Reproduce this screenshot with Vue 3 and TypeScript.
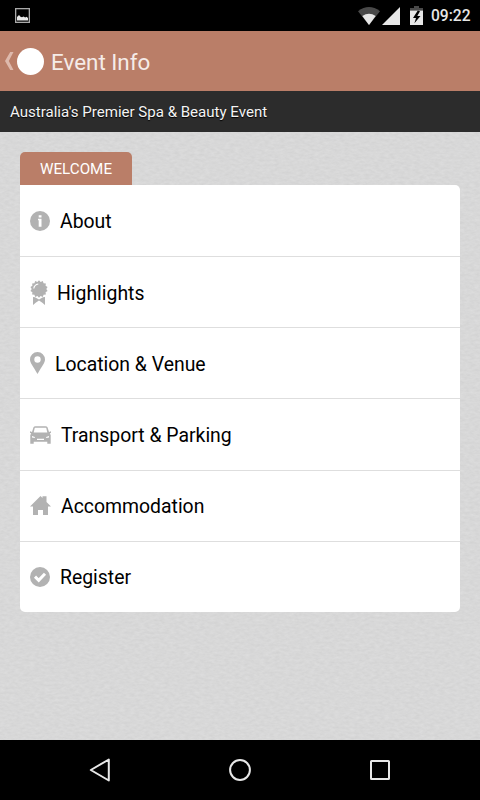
<script setup lang="ts">
interface MenuItem {
  id: string
  label: string
  width: number
  gap: number
}

const items: MenuItem[] = [
  { id: 'about', label: 'About', width: 20, gap: 10 },
  { id: 'highlights', label: 'Highlights', width: 18, gap: 9 },
  { id: 'location', label: 'Location & Venue', width: 15, gap: 10 },
  { id: 'transport', label: 'Transport & Parking', width: 21, gap: 10 },
  { id: 'accommodation', label: 'Accommodation', width: 21, gap: 10 },
  { id: 'register', label: 'Register', width: 20, gap: 10 },
]

// Outline of the fourteen-toothed rosette
const rosette: string = Array.from({ length: 28 }, (_, i) => {
  const angle = (i * Math.PI) / 14
  const r = i % 2 ? 7.3 : 8.8
  return `${(9 + r * Math.sin(angle)).toFixed(2)},${(9 - r * Math.cos(angle)).toFixed(2)}`
}).join(' ')
</script>

<template>
  <div class="screen">
    <div class="status-bar">
      <svg class="picture" width="15" height="15" viewBox="0 0 15 15">
        <rect x=".65" y=".65" width="13.7" height="13.7" fill="none" stroke="#aaa" stroke-width="1.3" />
        <path d="M2 12.500V9L4 7l1.500 1.700L7 9.300 8.500 8.500l1.700 1L11.500 8.700l1.500 1.300v2.500z" fill="#e8e8e8" />
      </svg>
      <div class="status-right">
        <svg class="wifi" width="22" height="18" viewBox="0 0 22 18">
          <path d="M0 4.200Q11-4 22 4.200L11 18z" fill="#494949" />
          <path d="M4.300 9Q11 4.500 17.700 9L11 18z" fill="#e7e7e7" />
        </svg>
        <svg class="signal" width="18" height="18" viewBox="0 0 18 18"><path d="M18 0v18H0z" fill="#e7e7e7" /></svg>
        <svg class="battery" width="13" height="19" viewBox="0 0 13 19">
          <path d="M0 4.500V2h4V0h5v2h4v2.500z" fill="#494949" />
          <path d="M0 4.500h13V19H0z" fill="#e7e7e7" />
          <path d="M7.800 4.500L3 12h3l-1.600 5.200L10.500 10H7.300L10 5.200z" fill="#000" />
        </svg>
        <span class="clock">09:22</span>
      </div>
    </div>

    <header class="action-bar">
      <svg class="chevron" width="9" height="18" viewBox="0 0 9 18">
        <path d="M5.200 0H8.500L3.800 9l4.700 9H5.200L0 9z" fill="#deb9ac" />
      </svg>
      <span class="logo"></span>
      <h1>Event Info</h1>
    </header>
    <div class="subtitle">Australia's Premier Spa &amp; Beauty Event</div>

    <main>
      <svg class="paper" width="480" height="608" aria-hidden="true">
        <filter id="grain" x="0" y="0" width="100%" height="100%" color-interpolation-filters="sRGB">
          <feTurbulence type="fractalNoise" baseFrequency=".2 .4" numOctaves="3" seed="7" />
          <feColorMatrix values=".055 0 0 0 .818  .055 0 0 0 .818  .055 0 0 0 .819  0 0 0 0 1" />
        </filter>
        <rect width="480" height="608" filter="url(#grain)" />
      </svg>
      <div class="tab">WELCOME</div>
      <ul class="menu">
        <li v-for="item in items" :key="item.id" :style="{ gap: item.gap + 'px' }">
          <svg v-if="item.id === 'about'" class="icon" :width="item.width" height="20" viewBox="0 0 20 20">
            <circle cx="10" cy="10" r="10" fill="#b2b2b2" />
            <path d="M8.700 4.200h2.800v2.300H8.700zM8 7.800h3.500V15.700H8.700V9.300H8z" fill="#fff" />
          </svg>
          <svg v-else-if="item.id === 'highlights'" class="icon award" :width="item.width" height="25" viewBox="0 0 18 25">
            <polygon :points="rosette" fill="#b2b2b2" />
            <path d="M3.800 8.500Q4.300 4.700 8.300 4" fill="none" stroke="#fff" stroke-width="1.200" />
            <path d="M3 17l2 .2 4 2.300 4-2.300 2-.2v8l-3-2.600-3-1.800-3 1.800L3 25z" fill="#b2b2b2" />
          </svg>
          <svg v-else-if="item.id === 'location'" class="icon" :width="item.width" height="22" viewBox="0 0 15 22">
            <path fill-rule="evenodd" d="M7.500 0A7.500 7.500 0 0 0 0 7.500C0 11 3 14 7.500 22 12 14 15 11 15 7.500A7.500 7.500 0 0 0 7.500 0m0 4.300a3.200 3.200 0 1 1 0 6.400 3.200 3.200 0 0 1 0-6.400" fill="#b2b2b2" />
          </svg>
          <svg v-else-if="item.id === 'transport'" class="icon" :width="item.width" height="18" viewBox="0 0 21 18">
            <path fill-rule="evenodd" d="M3.500 1.200Q4 .3 5.500.3h10q1.500 0 2 .9L19 6l2-.7v1.500l-1.200.8.900 1.400v8.700h-3.400V15.800H3.700v1.900H.3V9l.9-1.400L0 6.800V5.300L2 6zM4.800 1.800L3.700 6.500h13.600L16.200 1.800zM2 9.900v1.500l2.800.5v-1zM19 9.900l-2.800 1v1l2.800-.5zM7 12.800v1.200h7v-1.200z" fill="#b2b2b2" />
          </svg>
          <svg v-else-if="item.id === 'accommodation'" class="icon" :width="item.width" height="19" viewBox="0 0 21 19">
            <path d="M0 10.500L10.500 0l2 2V.3h4V6L21 10.500h-3V19h-5v-5H8v5H3v-8.500z" fill="#b2b2b2" />
          </svg>
          <svg v-else class="icon" :width="item.width" height="20" viewBox="0 0 20 20">
            <circle cx="10" cy="10" r="10" fill="#b2b2b2" />
            <path d="M5 9.700l3.700 3.600 6.300-6.600" fill="none" stroke="#fff" stroke-width="3" />
          </svg>
          <span class="label">{{ item.label }}</span>
        </li>
      </ul>
    </main>

    <nav class="nav-bar">
      <svg width="22" height="24" viewBox="0 0 22 24"><path d="M19.800 1.500v21L1.800 12z" fill="none" stroke="#e8e8e8" stroke-width="2" stroke-linejoin="round" /></svg>
      <svg width="22" height="22" viewBox="0 0 22 22"><circle cx="11" cy="11" r="9.900" fill="none" stroke="#e8e8e8" stroke-width="2" /></svg>
      <svg width="22" height="22" viewBox="0 0 22 22"><rect x="2" y="2" width="18" height="18" rx=".5" fill="none" stroke="#e8e8e8" stroke-width="2" /></svg>
    </nav>
  </div>
</template>

<style>
body { margin: 0; background: #000; }
</style>

<style scoped>
.screen {
  width: 480px;
  height: 800px;
  display: flex;
  flex-direction: column;
  overflow: hidden;
  font-family: Roboto, "Liberation Sans", sans-serif;
}
svg { display: block; flex: none; }
.status-bar {
  height: 31px;
  flex: none;
  box-sizing: border-box;
  padding: 0 10px 0 15px;
  display: flex;
  align-items: center;
  justify-content: space-between;
  background: #000;
}
.status-right { display: flex; align-items: center; }
.signal { margin-left: 2px; }
.battery { margin-left: 10px; }
.clock {
  margin-left: 8px;
  color: #e7e7e7;
  font-size: 15.6px;
  font-weight: 500;
  line-height: 32px;
  width: 39px;
  white-space: nowrap;
}
.action-bar {
  height: 60px;
  flex: none;
  display: flex;
  align-items: center;
  padding-left: 5px;
  background: #ba7e68;
}
.logo {
  width: 27px;
  height: 27px;
  margin: 0 7px 0 3px;
  border-radius: 50%;
  background: #fff;
}
h1 {
  margin: 2px 0 0;
  color: #f5ece8;
  font-size: 22.4px;
  font-weight: 400;
}
.subtitle {
  height: 41px;
  flex: none;
  box-sizing: border-box;
  padding-left: 10px;
  line-height: 43px;
  background: #2c2c2c;
  color: #f4f4f4;
  font-size: 15.05px;
  text-shadow: 0 1px 1px #000;
}
main {
  position: relative;
  flex: 1;
  min-height: 0;
  padding: 20px 20px 0;
  background: #d8d8d8;
}
.paper { position: absolute; inset: 0; }
.tab {
  position: relative;
  width: 112px;
  height: 33px;
  border-radius: 5px 5px 0 0;
  background: #ba7e68;
  color: #fff;
  font-size: 15.2px;
  line-height: 35px;
  text-align: center;
}
.menu {
  position: relative;
  height: 427px;
  margin: 0;
  padding: 0;
  display: grid;
  grid-template-rows: repeat(6, 1fr);
  list-style: none;
  border-radius: 0 5px 5px 5px;
  background: #fff;
}
li {
  display: flex;
  align-items: center;
  padding-left: 10px;
  font-size: 19.4px;
  color: #000;
}
li + li { border-top: 1px solid #dedede; }
.label { padding-top: 2px; }
.nav-bar {
  height: 60px;
  flex: none;
  box-sizing: border-box;
  padding: 0 89px;
  display: flex;
  align-items: center;
  justify-content: space-between;
  background: #000;
}
</style>
